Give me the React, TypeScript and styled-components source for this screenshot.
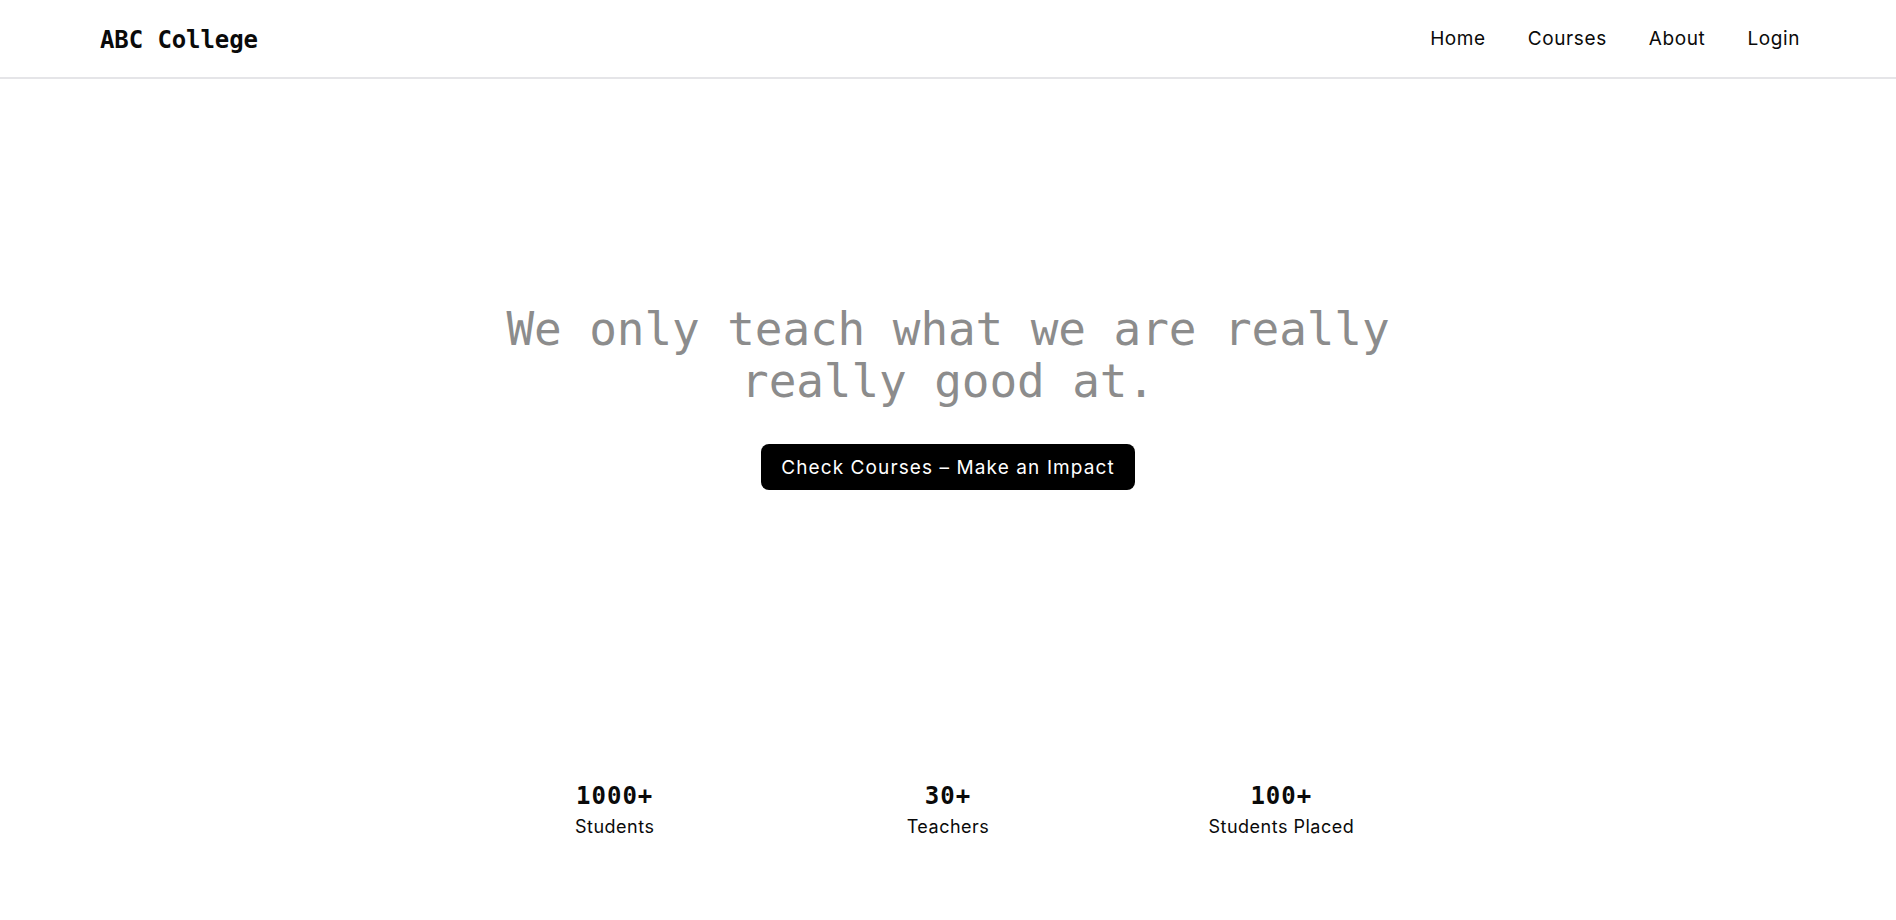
import React from "react";
import styled, { createGlobalStyle } from "styled-components";

const GlobalStyle = createGlobalStyle`
  html, body {
    margin: 0;
    padding: 0;
    background: #ffffff;
    color: #0a0a0a;
    font-family: Inter, "Noto Sans", sans-serif;
  }
  * { box-sizing: border-box; }
`;

const Page = styled.div`
  min-height: 920px;
  display: flex;
  flex-direction: column;
`;

const Header = styled.header`
  height: 79px;
  border-bottom: 2px solid #e5e5e8;
  display: flex;
  align-items: center;
  justify-content: space-between;
  padding: 0 96px 0 100px;
`;

const Logo = styled.a`
  font-family: "DejaVu Sans Mono", "Liberation Mono", monospace;
  font-weight: 700;
  font-size: 24px;
  letter-spacing: -0.1px;
  color: #0a0a0a;
  text-decoration: none;
  padding-top: 2px;
`;

const Nav = styled.nav`
  display: flex;
  align-items: center;
  gap: 42px;
`;

const NavLink = styled.a`
  font-family: Inter, "Noto Sans", sans-serif;
  font-size: 19px;
  color: #0a0a0a;
  text-decoration: none;
  letter-spacing: 0.6px;
`;

const Hero = styled.section`
  display: flex;
  flex-direction: column;
  align-items: center;
  padding-top: 224px;
`;

const Headline = styled.h1`
  margin: 0;
  max-width: 940px;
  text-align: center;
  font-family: "DejaVu Sans Mono", "Liberation Mono", monospace;
  font-weight: 400;
  font-size: 46px;
  line-height: 52px;
  letter-spacing: -0.1px;
  color: #8c8c8c;
`;

const CTA = styled.button`
  margin-top: 37px;
  height: 46px;
  padding: 0 20px;
  border: none;
  border-radius: 8px;
  background: #000000;
  color: #ffffff;
  font-family: Inter, "Noto Sans", sans-serif;
  font-size: 19px;
  letter-spacing: 1.1px;
  cursor: pointer;
`;

const Stats = styled.section`
  margin: 292px auto 0;
  width: 1000px;
  display: grid;
  grid-template-columns: repeat(3, 1fr);
`;

const Stat = styled.div`
  display: flex;
  flex-direction: column;
  align-items: center;
  gap: 4px;
`;

const StatValue = styled.div`
  font-family: "DejaVu Sans Mono", "Liberation Mono", monospace;
  font-weight: 700;
  font-size: 24px;
  line-height: 28px;
  letter-spacing: 1px;
  color: #0a0a0a;
`;

const StatLabel = styled.div`
  font-family: Inter, "Noto Sans", sans-serif;
  font-size: 18px;
  line-height: 26px;
  letter-spacing: 0.5px;
  color: #0a0a0a;
`;

const stats = [
  { value: "1000+", label: "Students" },
  { value: "30+", label: "Teachers" },
  { value: "100+", label: "Students Placed" },
];

export default function App() {
  return (
    <Page>
      <GlobalStyle />
      <Header>
        <Logo href="#">ABC College</Logo>
        <Nav>
          <NavLink href="#">Home</NavLink>
          <NavLink href="#">Courses</NavLink>
          <NavLink href="#">About</NavLink>
          <NavLink href="#">Login</NavLink>
        </Nav>
      </Header>
      <Hero>
        <Headline>We only teach what we are really really good at.</Headline>
        <CTA>Check Courses – Make an Impact</CTA>
      </Hero>
      <Stats>
        {stats.map((s) => (
          <Stat key={s.label}>
            <StatValue>{s.value}</StatValue>
            <StatLabel>{s.label}</StatLabel>
          </Stat>
        ))}
      </Stats>
    </Page>
  );
}
